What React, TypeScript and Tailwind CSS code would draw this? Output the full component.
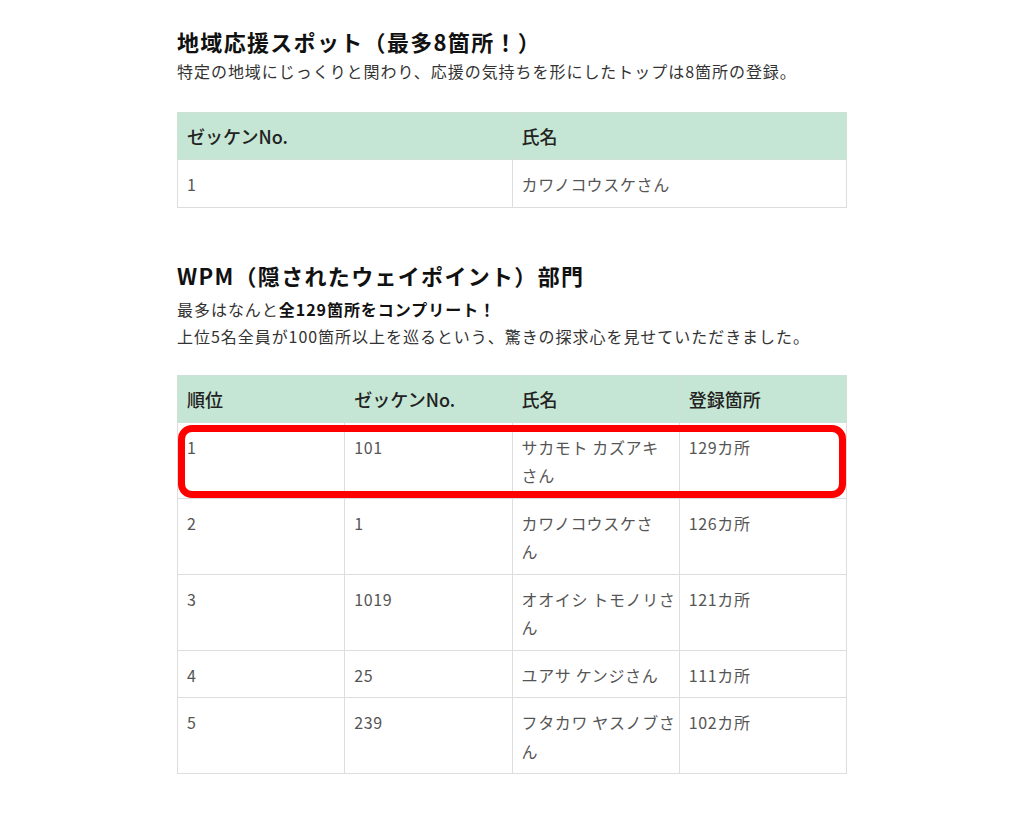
const font = { fontFamily: '"Noto Sans CJK JP", "Noto Sans", sans-serif' }

const spotRows = [{ no: '1', name: ['カワノコウスケさん'] }]

const wpmRows = [
	{ rank: '1', no: '101', name: ['サカモト カズアキ', 'さん'], count: '129カ所' },
	{ rank: '2', no: '1', name: ['カワノコウスケさ', 'ん'], count: '126カ所' },
	{ rank: '3', no: '1019', name: ['オオイシ トモノリさ', 'ん'], count: '121カ所' },
	{ rank: '4', no: '25', name: ['ユアサ ケンジさん'], count: '111カ所' },
	{ rank: '5', no: '239', name: ['フタカワ ヤスノブさ', 'ん'], count: '102カ所' },
]

function Th({ children }: { children: React.ReactNode }) {
	return (
		<th className="border border-[#cfe0d6] bg-[#c5e6d4] px-[9px] py-[10px] text-left align-top text-[18px] font-medium leading-[26px] text-[#222]">
			{children}
		</th>
	)
}

function Td({ children }: { children: React.ReactNode }) {
	return (
		<td className="border border-[#dddddd] px-[9px] pt-[10px] pb-[8px] align-top text-[16px] leading-[28.5px] tracking-[0.04em] text-[#555]">
			{children}
		</td>
	)
}

function Lines({ lines }: { lines: string[] }) {
	return (
		<>
			{lines.map((l, i) => (
				<span key={i} className="block whitespace-nowrap">
					{l}
				</span>
			))}
		</>
	)
}

function App() {
	return (
		<div className="min-h-[820px] bg-white" style={font}>
			<div className="mx-auto w-[670px] pt-[26px]">
				<h2 className="text-[22px] font-bold leading-[31px] tracking-[0.06em] text-[#111]">
					地域応援スポット（最多8箇所！）
				</h2>
				<p className="mt-[1px] text-[16px] leading-[27px] tracking-[0.06em] text-[#333]">
					特定の地域にじっくりと関わり、応援の気持ちを形にしたトップは8箇所の登録。
				</p>
				<table className="mt-[27px] w-full table-fixed border-collapse">
					<thead>
						<tr>
							<Th>ゼッケンNo.</Th>
							<Th>氏名</Th>
						</tr>
					</thead>
					<tbody>
						{spotRows.map((r) => (
							<tr key={r.no}>
								<Td>{r.no}</Td>
								<Td>
									<Lines lines={r.name} />
								</Td>
							</tr>
						))}
					</tbody>
				</table>

				<h2 className="mt-[52px] text-[22px] font-bold leading-[31px] tracking-[0.06em] text-[#111]">
					WPM（隠されたウェイポイント）部門
				</h2>
				<p className="mt-[5px] text-[16px] leading-[27px] tracking-[0.06em] text-[#333]">
					最多はなんと<strong className="font-bold text-[#111]">全129箇所をコンプリート！</strong>
					<br />
					上位5名全員が100箇所以上を巡るという、驚きの探求心を見せていただきました。
				</p>
				<div className="relative mt-[25px] pb-10">
					<table className="w-full table-fixed border-collapse">
						<thead>
							<tr>
								<Th>順位</Th>
								<Th>ゼッケンNo.</Th>
								<Th>氏名</Th>
								<Th>登録箇所</Th>
							</tr>
						</thead>
						<tbody>
							{wpmRows.map((r) => (
								<tr key={r.rank}>
									<Td>{r.rank}</Td>
									<Td>{r.no}</Td>
									<Td>
										<Lines lines={r.name} />
									</Td>
									<Td>{r.count}</Td>
								</tr>
							))}
						</tbody>
					</table>
					{/* 注釈の赤枠 */}
					<div className="absolute left-[1px] top-[50px] h-[73px] w-[668px] rounded-[14px] border-[7px] border-[#ff0000]" />
				</div>
			</div>
		</div>
	)
}

export default App
